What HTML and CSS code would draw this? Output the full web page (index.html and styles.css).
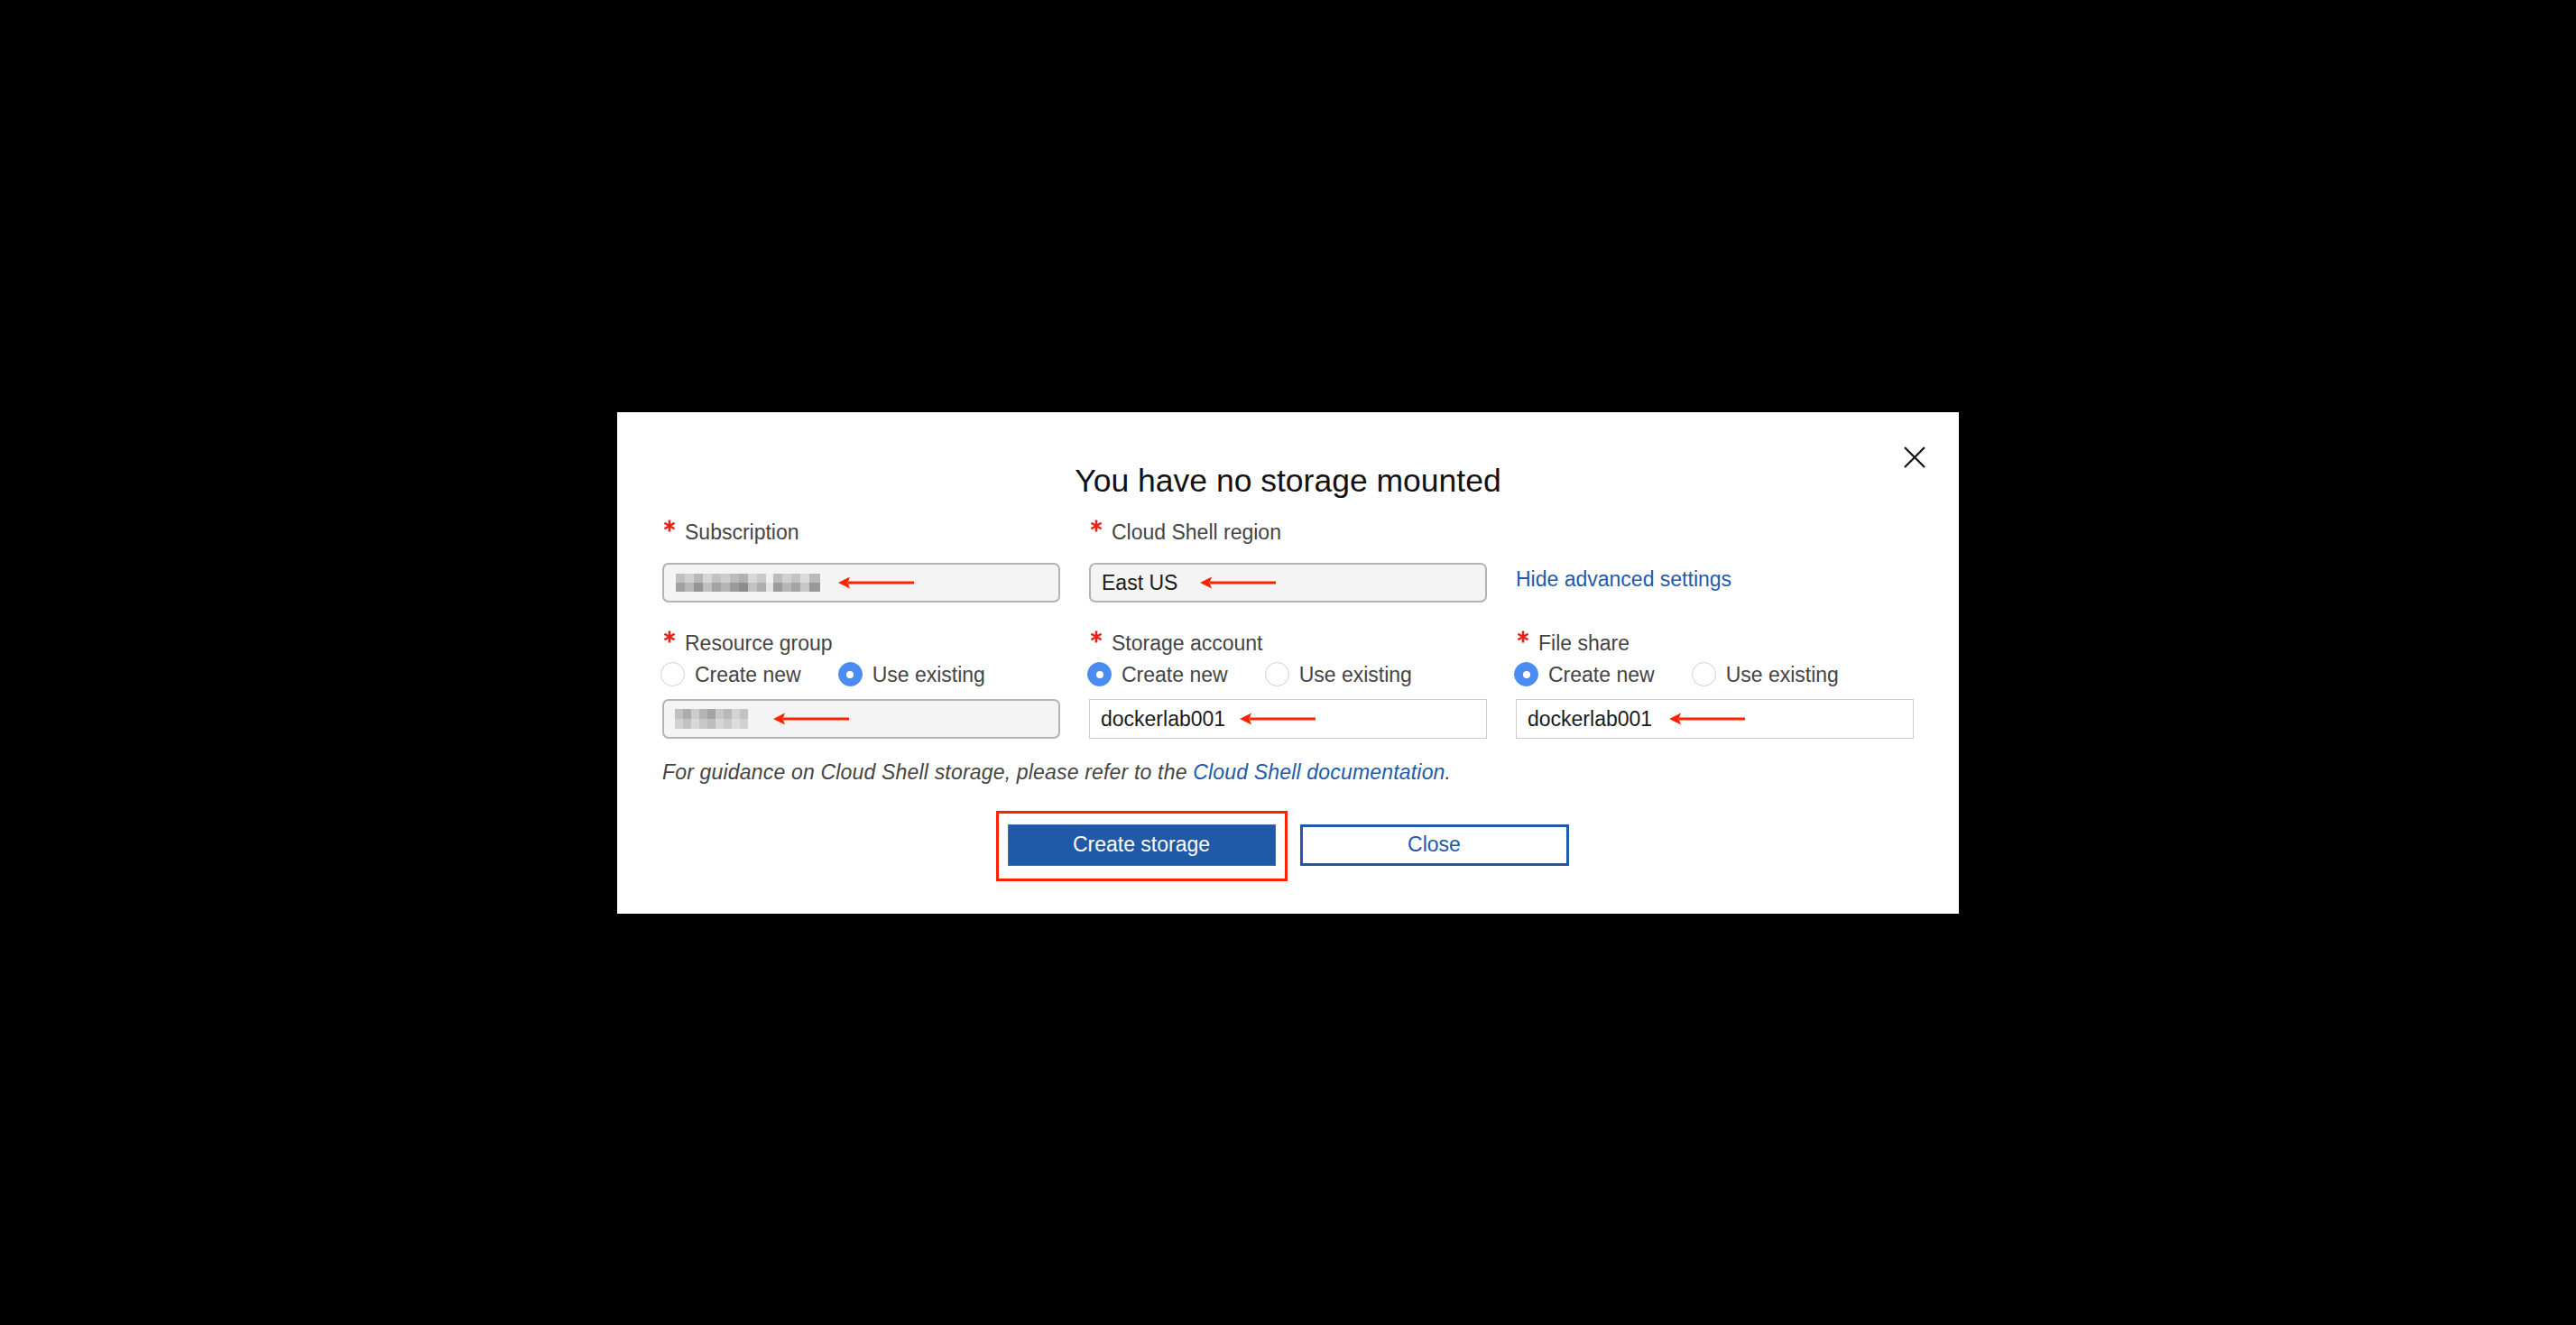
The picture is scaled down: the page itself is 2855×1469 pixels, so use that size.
FILE: index.html
```html
<!DOCTYPE html>
<html lang="en">
<head>
<meta charset="utf-8">
<title>You have no storage mounted</title>
<link rel="stylesheet" href="styles.css">
</head>
<body>
<div class="dialog">
  <button class="close-x" aria-label="Close">
    <svg width="24" height="24" viewBox="0 0 24 24"><path d="M1 1 L23 23 M23 1 L1 23" stroke="#111" stroke-width="2.2" fill="none"/></svg>
  </button>
  <h1 class="title">You have no storage mounted</h1>

  <div class="grid">
    <div class="field">
      <div class="label"><svg class="req" width="14" height="14" viewBox="0 0 14 14"><path d="M7 0.5 V13.5 M1.4 3.75 L12.6 10.25 M12.6 3.75 L1.4 10.25" stroke="#e5231b" stroke-width="2.6"/></svg>Subscription</div>
      <div class="input disabled">
        <span class="blur blur-sub"></span>
        <svg class="arrow" width="84" height="14" viewBox="0 0 84 14"><path d="M11 7 H84" stroke="#ff2200" stroke-width="3"/><path d="M0 7 L13 0.5 L10.5 7 L13 13.5 Z" fill="#ff2200"/></svg>
      </div>
    </div>
    <div class="field">
      <div class="label"><svg class="req" width="14" height="14" viewBox="0 0 14 14"><path d="M7 0.5 V13.5 M1.4 3.75 L12.6 10.25 M12.6 3.75 L1.4 10.25" stroke="#e5231b" stroke-width="2.6"/></svg>Cloud Shell region</div>
      <div class="input disabled">
        <span class="value">East US</span>
        <svg class="arrow a-region" width="84" height="14" viewBox="0 0 84 14"><path d="M11 7 H84" stroke="#ff2200" stroke-width="3"/><path d="M0 7 L13 0.5 L10.5 7 L13 13.5 Z" fill="#ff2200"/></svg>
      </div>
    </div>
    <div class="link-cell">
      <a class="link" href="#">Hide advanced settings</a>
    </div>

    <div class="field">
      <div class="label"><svg class="req" width="14" height="14" viewBox="0 0 14 14"><path d="M7 0.5 V13.5 M1.4 3.75 L12.6 10.25 M12.6 3.75 L1.4 10.25" stroke="#e5231b" stroke-width="2.6"/></svg>Resource group</div>
      <div class="radios">
        <label class="radio"><span class="dot"></span>Create new</label>
        <label class="radio on"><span class="dot"></span>Use existing</label>
      </div>
      <div class="input disabled">
        <span class="blur blur-rg"></span>
        <svg class="arrow a-rg" width="84" height="14" viewBox="0 0 84 14"><path d="M11 7 H84" stroke="#ff2200" stroke-width="3"/><path d="M0 7 L13 0.5 L10.5 7 L13 13.5 Z" fill="#ff2200"/></svg>
      </div>
    </div>
    <div class="field">
      <div class="label"><svg class="req" width="14" height="14" viewBox="0 0 14 14"><path d="M7 0.5 V13.5 M1.4 3.75 L12.6 10.25 M12.6 3.75 L1.4 10.25" stroke="#e5231b" stroke-width="2.6"/></svg>Storage account</div>
      <div class="radios">
        <label class="radio on"><span class="dot"></span>Create new</label>
        <label class="radio"><span class="dot"></span>Use existing</label>
      </div>
      <div class="input">
        <span class="value">dockerlab001</span>
        <svg class="arrow a-st" width="84" height="14" viewBox="0 0 84 14"><path d="M11 7 H84" stroke="#ff2200" stroke-width="3"/><path d="M0 7 L13 0.5 L10.5 7 L13 13.5 Z" fill="#ff2200"/></svg>
      </div>
    </div>
    <div class="field">
      <div class="label"><svg class="req" width="14" height="14" viewBox="0 0 14 14"><path d="M7 0.5 V13.5 M1.4 3.75 L12.6 10.25 M12.6 3.75 L1.4 10.25" stroke="#e5231b" stroke-width="2.6"/></svg>File share</div>
      <div class="radios">
        <label class="radio on"><span class="dot"></span>Create new</label>
        <label class="radio"><span class="dot"></span>Use existing</label>
      </div>
      <div class="input">
        <span class="value">dockerlab001</span>
        <svg class="arrow a-fs" width="84" height="14" viewBox="0 0 84 14"><path d="M11 7 H84" stroke="#ff2200" stroke-width="3"/><path d="M0 7 L13 0.5 L10.5 7 L13 13.5 Z" fill="#ff2200"/></svg>
      </div>
    </div>
  </div>

  <p class="guidance">For guidance on Cloud Shell storage, please refer to the <a class="doc-link" href="#">Cloud Shell documentation</a>.</p>

  <div class="actions">
    <div class="primary-wrap">
      <button class="btn primary">Create storage</button>
      <span class="highlight"></span>
    </div>
    <button class="btn secondary">Close</button>
  </div>
</div>
</body>
</html>
```

FILE: styles.css
```css
html, body {
  margin: 0;
  padding: 0;
  background: #000;
}
body {
  height: 100vh;
  display: flex;
  align-items: center;
  justify-content: center;
  font-family: "Liberation Sans", Arial, sans-serif;
}
.dialog {
  position: relative;
  box-sizing: border-box;
  width: 1487px;
  background: #fff;
  padding: 56px 50px 53px 50px;
}
.close-x {
  position: absolute;
  top: 38px;
  right: 37px;
  padding: 0;
  margin: 0;
  border: 0;
  background: transparent;
  width: 24px;
  height: 24px;
  line-height: 0;
}
.title {
  margin: 0;
  text-align: center;
  font-weight: normal;
  font-size: 35.5px;
  line-height: 40px;
  color: #111;
}
.grid {
  margin-top: 23px;
  display: grid;
  grid-template-columns: 441px 441px 441px;
  column-gap: 32px;
  row-gap: 31px;
}
.field {
  display: flex;
  flex-direction: column;
}
.label {
  display: flex;
  align-items: flex-start;
  font-size: 23px;
  line-height: 28px;
  height: 28px;
  color: #444;
}
.req {
  margin-top: 0;
  margin-left: 1px;
  margin-right: 10px;
  flex: none;
}
.field > .input {
  margin-top: 20px;
}
.radios {
  margin-top: 7px;
  display: flex;
  height: 28px;
  gap: 43px;
}
.radios + .input {
  margin-top: 13px;
}
.radio {
  display: flex;
  align-items: center;
  font-size: 23px;
  line-height: 28px;
  color: #444;
}
.dot {
  box-sizing: border-box;
  width: 27px;
  height: 27px;
  border-radius: 50%;
  border: 1px solid #cfcfcf;
  background: #fff;
  margin-left: -2px;
  margin-right: 11px;
  display: flex;
  align-items: center;
  justify-content: center;
}
.radio.on .dot {
  background: #4a8cf1;
  border-color: #4a8cf1;
}
.radio.on .dot::after {
  content: "";
  width: 8px;
  height: 8px;
  border-radius: 50%;
  background: #fff;
}
.input {
  box-sizing: border-box;
  height: 44px;
  display: flex;
  align-items: center;
  padding-left: 12px;
  border: 1px solid #cccccc;
  background: #fff;
  font-size: 23px;
  color: #1a1a1a;
}
.input.disabled {
  border: 2px solid #b3b3b3;
  border-radius: 7px;
  background: #f4f4f4;
}
.value {
  line-height: 28px;
}
.arrow {
  flex: none;
  margin-left: 20px;
}
.a-region { margin-left: 25px; }
.a-rg { margin-left: 28px; }
.a-st { margin-left: 16px; }
.a-fs { margin-left: 19px; }
.blur {
  display: block;
  flex: none;
}
.blur-sub {
  width: 160px;
  height: 20px;
  margin-left: 1px;
  background:
    linear-gradient(180deg, rgba(244,244,244,0.35) 0 10px, rgba(120,120,120,0.08) 10px 20px),
    linear-gradient(90deg, #a4a4a4 0 10px, #bdbdbd 10px 20px, #979797 20px 30px, #c6c6c6 30px 40px, #a7a7a7 40px 50px, #b9b9b9 50px 60px, #9e9e9e 60px 70px, #8d8d8d 70px 80px, #c9c9c9 80px 90px, #b2b2b2 90px 100px, #ececec 100px 108px, #9f9f9f 108px 118px, #bcbcbc 118px 128px, #a8a8a8 128px 138px, #cdcdcd 138px 148px, #9b9b9b 148px 160px);
}
.blur-rg {
  width: 81px;
  height: 22px;
  background:
    linear-gradient(180deg, rgba(244,244,244,0.2) 0 11px, rgba(244,244,244,0.45) 11px 22px),
    linear-gradient(90deg, #b4b4b4 0 9px, #9a9a9a 9px 18px, #c2c2c2 18px 27px, #a3a3a3 27px 36px, #8f8f8f 36px 45px, #bdbdbd 45px 54px, #a9a9a9 54px 63px, #cbcbcb 63px 72px, #b6b6b6 72px 81px);
}
.link-cell {
  align-self: end;
  height: 44px;
  display: flex;
  align-items: center;
  padding-bottom: 8px;
  box-sizing: border-box;
}
.link {
  font-size: 23px;
  line-height: 28px;
  color: #1f5aaa;
  text-decoration: none;
}
.guidance {
  margin: 23px 0 0 0;
  font-size: 23px;
  line-height: 28px;
  font-style: italic;
  letter-spacing: 0.18px;
  color: #444;
}
.doc-link {
  color: #1f5aaa;
  text-decoration: none;
}
.actions {
  margin-top: 44px;
  display: flex;
  justify-content: center;
  gap: 27px;
}
.primary-wrap {
  position: relative;
  display: flex;
}
.btn {
  box-sizing: border-box;
  width: 297px;
  height: 46px;
  margin: 0;
  padding: 0;
  font-family: "Liberation Sans", Arial, sans-serif;
  font-size: 23px;
  cursor: pointer;
}
.primary {
  background: #2159a9;
  border: 1px solid #3b6db5;
  color: #fff;
}
.secondary {
  width: 298px;
  background: #fff;
  border: 3px solid #2159a9;
  color: #2159a9;
}
.highlight {
  position: absolute;
  top: -15px;
  left: -13px;
  right: -13px;
  bottom: -17px;
  border: 3px solid #ff2200;
  pointer-events: none;
}
```
